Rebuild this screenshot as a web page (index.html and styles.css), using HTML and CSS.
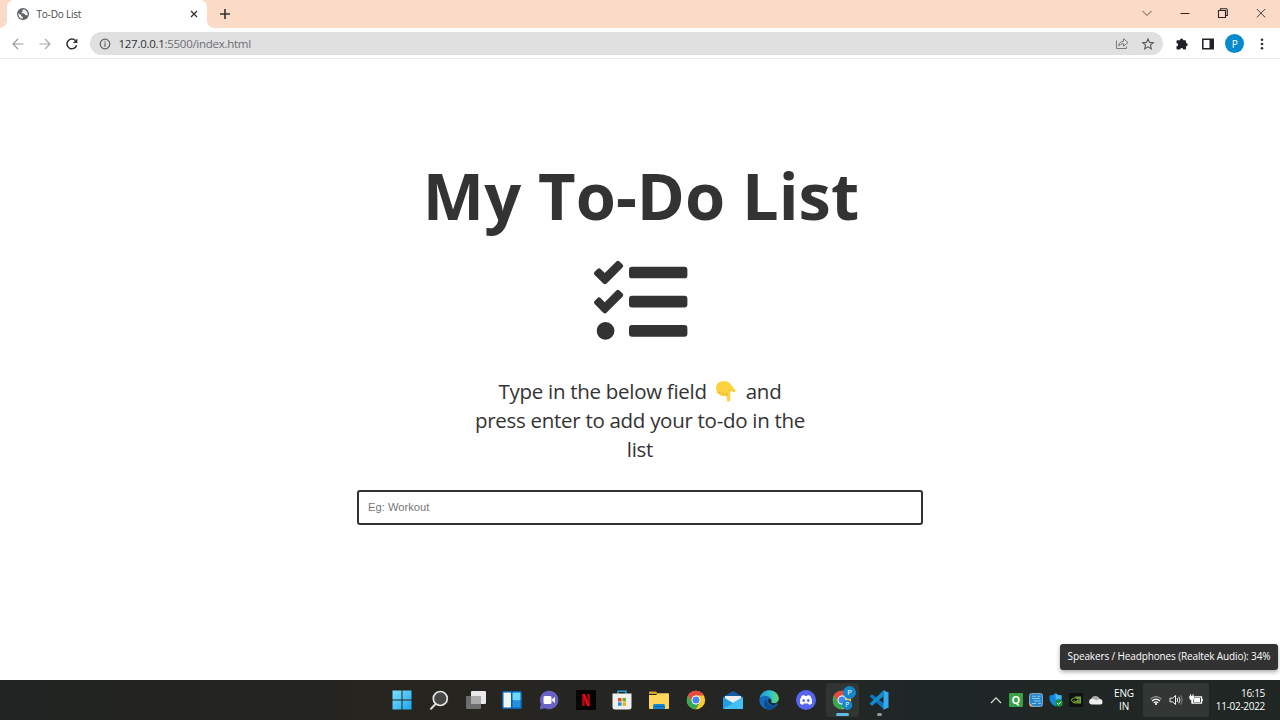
FILE: index.html
```html
<!DOCTYPE html>
<html lang="en">
<head>
<meta charset="utf-8">
<title>To-Do List</title>
<link rel="stylesheet" href="styles.css">
</head>
<body>
<div class="screen">
  <header class="tabstrip">
    <div class="tab">
      <svg class="globe" viewBox="0 0 12 12"><circle cx="6" cy="6" r="6" fill="#5f6368"/><path d="M1.2 5.2 3.8 6.7 4.6 8.2 6 9.2 5.4 10.8C2.8 10.5 1 8.200 1.200 5.200ZM6.700 1.200 5.300 2.500 5.700 3.500 4.500 4.300 4.800 5.300 7.200 5.400 8.200 6.900 10.500 7.500C11.200 4.900 9.800 2.200 6.700 1.200Z" fill="#f5f5f5"/></svg>
      <span class="tab-title">To-Do List</span>
      <svg class="tab-close" viewBox="0 0 8 8"><path d="M1 1 7 7M7 1 1 7" stroke="#303030" stroke-width="1.3"/></svg>
    </div>
    <svg class="new-tab" viewBox="0 0 10 10"><path d="M5 0V10M0 5H10" stroke="#303030" stroke-width="1.6"/></svg>
    <div class="window-buttons">
      <svg viewBox="0 0 12 12"><path d="M1.500 4 6 8.500 10.500 4" fill="none" stroke="#5c4f49" stroke-width="1"/></svg>
      <svg viewBox="0 0 12 12"><path d="M1.500 6.500H10.500" stroke="#2e2825" stroke-width="1"/></svg>
      <svg viewBox="0 0 12 12"><path d="M1.500 3.500H8.500V10.500H1.500ZM3.500 3V1.700H9.300Q10.300 1.700 10.300 2.700V8.500H9" fill="none" stroke="#2e2825" stroke-width="1.100"/></svg>
      <svg viewBox="0 0 12 12"><path d="M1.800 2 10.200 10.400M10.200 2 1.800 10.400" stroke="#4a3f3a" stroke-width="1"/></svg>
    </div>
  </header>
  <nav class="toolbar">
    <svg class="nav-icon" viewBox="0 0 12 12"><path d="M11.500 6H1.200M6 1 1 6 6 11" fill="none" stroke="#999" stroke-width="1.200"/></svg>
    <svg class="nav-icon" viewBox="0 0 12 12"><path d="M.5 6H10.800M6 1 11 6 6 11" fill="none" stroke="#a8a8a8" stroke-width="1.200"/></svg>
    <svg class="nav-icon" viewBox="0 0 12 12"><path d="M10.600 7.300A4.900 4.900 0 1 1 9.500 2.600" fill="none" stroke="#303030" stroke-width="1.500"/><path d="M11.400.5V5H6.900Z" fill="#303030"/></svg>
    <div class="address">
      <svg class="info" viewBox="0 0 12 12"><circle cx="6" cy="6" r="4.800" fill="none" stroke="#5f6368" stroke-width="1.200"/><path d="M6 5.300V8.800M6 3.200V4.400" stroke="#5f6368" stroke-width="1.200"/></svg>
      <span class="url"><b>127.0.0.1</b>:5500/index.html</span>
      <svg class="share" viewBox="0 0 14 13"><path d="M1.500 3.500V11.500H11.500V9.500M3.700 9C4 6 5.700 4.400 8.500 4.300V1.700L13 5.600 8.500 9.200V6.700C6.300 6.700 4.800 7.500 3.700 9Z" fill="none" stroke="#77797b" stroke-width="1"/></svg>
      <svg class="star" viewBox="0 0 12 12"><path d="M6 .9 7.500 4.400 11.300 4.700 8.400 7.200 9.300 10.900 6 8.900 2.700 10.900 3.600 7.200.7 4.700 4.500 4.400Z" fill="none" stroke="#55585b" stroke-width="1.100"/></svg>
    </div>
    <div class="actions">
      <svg viewBox="0 0 12 12"><path d="M4 2.200A1.600 1.600 0 0 1 7.200 2.200H9Q10 2.200 10 3.200V5A1.600 1.600 0 0 1 10.200 8.200H10V10.500Q10 11.500 9 11.500H7.300A1.600 1.600 0 0 0 4.100 11.500H1.500Q.5 11.500.5 10.500V8.300A1.600 1.600 0 0 0 .5 5.100V3.200Q.5 2.200 1.500 2.200Z" fill="#202124"/></svg>
      <svg viewBox="0 0 12 12"><path d="M.8 1.200H11.200V10.800H.8Z" fill="none" stroke="#202124" stroke-width="1.500"/><path d="M7.500 1H11.500V11H7.500Z" fill="#202124"/></svg>
      <span class="avatar">P</span>
      <svg viewBox="0 0 12 12"><g fill="#303030"><circle cx="6" cy="1.700" r="1.300"/><circle cx="6" cy="6" r="1.300"/><circle cx="6" cy="10.300" r="1.300"/></g></svg>
    </div>
  </nav>
  <main class="page">
    <h1 class="title">My To-Do List</h1>
    <svg class="tasks" viewBox="0 0 512 512"><path fill="#333" d="M139.610 35.500a12 12 0 0 0-17 0L58.930 98.810l-22.700-22.120a12 12 0 0 0-17 0L3.530 92.410a12 12 0 0 0 0 17l47.590 47.400a12.780 12.780 0 0 0 17.610 0l15.590-15.620L156.520 69a12.090 12.090 0 0 0 .09-17zm0 159.190a12 12 0 0 0-17 0l-63.680 63.720-22.700-22.100a12 12 0 0 0-17 0L3.530 252a12 12 0 0 0 0 17L51 316.500a12.770 12.770 0 0 0 17.600 0l15.700-15.690 72.200-72.220a12 12 0 0 0 .09-16.900zM64 368c-26.490 0-48.590 21.500-48.590 48S37.530 464 64 464a48 48 0 0 0 0-96zm432 16H208a16 16 0 0 0-16 16v32a16 16 0 0 0 16 16h288a16 16 0 0 0 16-16v-32a16 16 0 0 0-16-16zm0-320H208a16 16 0 0 0-16 16v32a16 16 0 0 0 16 16h288a16 16 0 0 0 16-16V80a16 16 0 0 0-16-16zm0 160H208a16 16 0 0 0-16 16v32a16 16 0 0 0 16 16h288a16 16 0 0 0 16-16v-32a16 16 0 0 0-16-16z"/></svg>
    <p class="hint"><span class="line first">Type in the below field <svg class="hand" viewBox="0 0 20 21"><path d="M0 7C0 3 3 .3 7.500.3H9C12.500.3 14 2 15.500 4.500L19 8.500C20.500 10.300 19 11.800 17.300 11L14.300 9.700V19C14.300 21 10.800 21 10.800 19V14.500C10 15.800 8 15.800 7.500 14.500 6 15.600 4.200 15 4 13.300 2 13.500.5 12.300.8 10.500Q0 9.500 0 7Z" fill="#fdd23f"/><path d="M3.900 13.200V10.800M7.400 14.400V11.500M10.800 14.500V11.800M14.300 9.700 13 8.700" fill="none" stroke="#dda52e" stroke-width=".8"/></svg> and</span><span class="line">press enter to add your to-do in the</span><span class="line last">list</span></p>
    <input class="todo" type="text" placeholder="Eg: Workout">
  </main>
  <footer class="taskbar">
    <div class="apps">
      <div class="app"><svg viewBox="0 0 20 20"><defs><linearGradient id="win" x1="0" y1="0" x2="1" y2="1"><stop stop-color="#7de2ff"/><stop offset="1" stop-color="#1ba5ef"/></linearGradient></defs><path d="M.5.5H9.500V9.500H.5ZM10.500.5H19.500V9.500H10.500ZM.5 10.500H9.500V19.500H.5ZM10.500 10.500H19.500V19.500H10.500Z" fill="url(#win)"/></svg></div>
      <div class="app"><svg viewBox="0 0 20 20"><path d="M7 13.500 2 18.700" stroke="#ddd" stroke-width="2" stroke-linecap="round"/><circle cx="11.300" cy="8.500" r="7" fill="#484846" stroke="#e2e2e2" stroke-width="1.700"/></svg></div>
      <div class="app"><svg viewBox="0 0 20 20"><rect x="5" y="1" width="15" height="13" rx="1" fill="#e9e9e9"/><rect x="0" y="6" width="15" height="13" rx="1" fill="#777" fill-opacity=".88"/><path d="M5 6H15V14H5Z" fill="#aaa"/></svg></div>
      <div class="app"><svg viewBox="0 0 20 20"><rect y="1" width="20" height="18" rx="1.500" fill="#0960aa"/><rect x="1.500" y="2.500" width="7.500" height="15" rx=".7" fill="#f2f5f7"/><rect x="10.500" y="2.500" width="8" height="8" rx=".7" fill="#6ed5ff"/><rect x="10.500" y="11" width="8" height="6.500" rx=".7" fill="#258fe0"/></svg></div>
      <div class="app"><svg viewBox="0 0 20 20"><path d="M10.300.8A9.200 9.200 0 1 1 6.200 18.300L.8 19.300 1.800 14A9.200 9.200 0 0 1 10.300.8Z" fill="#6862c5"/><rect x="4.500" y="6" width="8" height="8" rx="1.500" fill="#fff"/><path d="M13 9.200 16 6.800V13.200L13 10.800Z" fill="#eee"/></svg></div>
      <div class="app"><svg viewBox="0 0 20 20"><path d="M0 0H20V20H0Z" fill="#050505"/><path d="M6.200 4H8.800V16L6.200 16.300ZM11.200 4H13.800V16.300L11.200 16Z" fill="#b20710"/><path d="M6.200 4H8.900L13.800 16.300 11 16Z" fill="#e50914"/></svg></div>
      <div class="app"><svg viewBox="0 0 20 20"><path d="M6 4V1.200H14V4" fill="none" stroke="#2f9ed4" stroke-width="1.500"/><path d="M.5 3.500H19.500V17Q19.500 19.500 17 19.500H3Q.5 19.500.5 17Z" fill="#f0f0f0"/><path d="M6 8H9.500V11.500H6Z" fill="#e7482b"/><path d="M10.500 8H14V11.500H10.500Z" fill="#71ad20"/><path d="M6 12.300H9.500V15.800H6Z" fill="#1791dc"/><path d="M10.500 12.300H14V15.800H10.500Z" fill="#f6ad12"/></svg></div>
      <div class="app"><svg viewBox="0 0 20 20"><path d="M0 2.500Q0 1.500 1 1.500H7L9 4H0Z" fill="#dda12a"/><path d="M0 5H7L9 3.200H19Q20 3.200 20 4.200V18Q20 19 19 19H1Q0 19 0 18Z" fill="#ffd55b"/><path d="M4 19V15.500Q4 14 5.500 14H14.500Q16 14 16 15.500V19Z" fill="#1685d1"/><path d="M5.500 16.500H14.500" stroke="#0864ad"/></svg></div>
      <div class="app"><svg viewBox="0 0 20 20"><circle cx="10" cy="10" r="9.200" fill="#fbc92c"/><path d="M2.030 5.400A9.200 9.200 0 0 1 17.970 5.400H10L6 12.300Z" fill="#e44a3d"/><path d="M2.030 5.400A9.200 9.200 0 0 0 10 19.200L14 12.300H6Z" fill="#35a853"/><circle cx="10" cy="10" r="4.500" fill="#fff"/><circle cx="10" cy="10" r="3.500" fill="#4285f4"/></svg></div>
      <div class="app"><svg viewBox="0 0 20 20"><path d="M0 7 10 1 20 7V12H0Z" fill="#115da7"/><path d="M2 6H18V15H2Z" fill="#eee"/><path d="M0 7 10 13 20 7V18Q20 19 19 19H1Q0 19 0 18Z" fill="#239ce3"/><path d="M0 19 10 13 20 7V18Q20 19 19 19Z" fill="#43c0f3"/></svg></div>
      <div class="app"><svg viewBox="0 0 20 20"><defs><linearGradient id="edge"><stop stop-color="#218fd4"/><stop offset=".6" stop-color="#35c4cc"/><stop offset="1" stop-color="#67d65b"/></linearGradient></defs><circle cx="10" cy="10" r="9.700" fill="#126cbb"/><path d="M.5 8.500C1.500 3 5.500.3 10.300.3 16 .3 20 4.500 19.800 9 19.600 13 15 14.300 12 12.500 13.500 9 11 6.500 7.500 6 4.500 5.700 2 6.600.5 8.500Z" fill="url(#edge)"/><path d="M8.500 9C7 11 8.500 15 13 15.500Q16 15.800 18 14.500C16 18 12 20 9 19.500 4 17 3.500 11 8.500 9Z" fill="#114a8e"/><path d="M9.500 9Q8 12.500 12 14.500 16 16 19 13L20 13.500V10.500Q17 14.500 12 12.600 13 10.500 11.500 9Z" fill="#242523"/></svg></div>
      <div class="app"><svg viewBox="0 0 20 20"><circle cx="10" cy="10" r="10" fill="#5865f2"/><path d="M5.700 5.800 8.300 5 9 6H11L11.700 5 14.300 5.800Q16.500 9.500 16 13.500L13.200 15 12.300 13.500H7.700L6.800 15 4 13.500Q3.500 9.500 5.700 5.800Z" fill="#fff"/><ellipse cx="7.700" cy="10.500" rx="1.300" ry="1.500" fill="#5865f2"/><ellipse cx="12.300" cy="10.500" rx="1.300" ry="1.500" fill="#5865f2"/></svg></div>
      <div class="app active"><svg class="chrome-profile" viewBox="0 0 26 26"><circle cx="12" cy="13" r="9.200" fill="#fbc92c"/><path d="M4.030 8.400A9.200 9.200 0 0 1 19.970 8.400H12L8 15.300Z" fill="#e44a3d"/><path d="M4.030 8.400A9.200 9.200 0 0 0 12 22.200L16 15.300H8Z" fill="#35a853"/><circle cx="12" cy="13" r="4.500" fill="#fff"/><circle cx="12" cy="13" r="3.500" fill="#4285f4"/><circle cx="19.500" cy="5.500" r="6.500" fill="#1386c9"/><circle cx="17.300" cy="18" r="5" fill="#1386c9"/><text class="badge-text" x="19.500" y="8.200" font-size="7.500">P</text><text class="badge-text" x="17.300" y="20.300" font-size="6.500">P</text></svg></div>
      <div class="app running"><svg viewBox="0 0 20 20"><path d="M.5 6.300 3 4.300 15 13.500V19.500Z" fill="#0877be"/><path d="M.5 13.700 14.500.2V6.200L3 15.700Z" fill="#138bd0"/><path d="M14.500.2 19.500 2.500V17.500L14.500 19.800Z" fill="#35a9ed"/></svg></div>
    </div>
    <div class="tray">
      <svg viewBox="0 0 14 14"><path d="M2 10 7 4.800 12 10" fill="none" stroke="#ddd" stroke-width="1.200"/></svg>
      <span class="quick-heal">Q</span>
      <svg viewBox="0 0 14 14"><rect x=".5" y=".5" width="13" height="13" rx="2" fill="#2386cf" stroke="#8da4b2"/><path d="M3 3.200H7M8 3.200H11.500M3 5.500H11M5 8H11.500M3 10.500H7M9 10.500H12" stroke="#8dccef" stroke-width="1"/><path d="M1 10V13H4Z" fill="#e5ae38"/></svg>
      <svg viewBox="0 0 14 14"><path d="M.5 2.500Q4 2.500 6.500.3 9 2.500 12.500 2.500V6Q12 11 6.500 13.500 1 11 .5 6Z" fill="#1388db"/><path d="M6.500.3Q9 2.500 12.500 2.500V6.500H6.500Z" fill="#45b6f1"/><circle cx="10" cy="10" r="3.800" fill="#16913d"/><path d="M8 10 9.500 11.400 12 8.800" stroke="#fff" fill="none"/></svg>
      <svg viewBox="0 0 14 14"><path d="M0 0H14V14H0Z" fill="#111"/><path d="M2 7Q5 3.600 8 5.200 10 6.500 8 8.300 6 9 5 7.200M2 7Q4.500 11 8.500 9.500 10 8.500 10.500 7" fill="none" stroke="#76a13a" stroke-width="1.100"/><path d="M6 3.500H12V10.500H7Q11 9 11 7 9 4.500 6 4.500Z" fill="#76a13a"/></svg>
      <svg viewBox="0 0 14 14"><path d="M2.500 11.500A2.900 2.900 0 0 1 2.300 5.800 4.700 4.700 0 0 1 10.700 6 2.800 2.800 0 0 1 11.500 11.500Z" fill="#eee"/><path d="M2.300 5.800A4.700 4.700 0 0 1 10.700 6Q8.500 6 7.500 7.600Q5.500 5.500 2.300 5.800Z" fill="#aaa"/></svg>
    </div>
    <div class="language"><span>ENG</span><span>IN</span></div>
    <div class="quick-settings">
      <svg viewBox="0 0 14 14"><path d="M1.500 6.200Q7 1 12.500 6.200" fill="none" stroke="#999" stroke-width="1.100"/><path d="M3 8Q7 4.200 11 8M4.800 9.800Q7 7.800 9.200 9.800" fill="none" stroke="#fff" stroke-width="1.200"/><circle cx="7" cy="11" r="1.100" fill="#fff"/></svg>
      <svg viewBox="0 0 14 14"><path d="M1 5.200H3.500L6.500 2.500V11.500L3.500 8.800H1ZM8 5Q9.300 7 8 9M9.800 3.700Q12 7 9.800 10.300" fill="none" stroke="#eee" stroke-width="1"/><path d="M11.500 2.300Q14.700 7 11.500 11.700" fill="none" stroke="#888"/></svg>
      <svg viewBox="0 0 14 14"><path d="M5.500 3.800H12.500V10.200H3.500V7" fill="none" stroke="#fff" stroke-width="1.200"/><path d="M5.500 5H11V9H4.700V7.500ZM13.200 5.700H14V8.300H13.200Z" fill="#fff"/><path d="M.8 3.300H4.800V5.500Q4.700 6.700 2.800 6.700 .9 6.700.8 5.500ZM1.500 1.300V3M4 1.300V3M2.800 6.500V10.500" fill="#fff" stroke="#fff"/></svg>
    </div>
    <div class="clock"><span>16:15</span><span>11-02-2022</span></div>
  </footer>
  <div class="volume-tip">Speakers / Headphones (Realtek Audio): 34%</div>
</div>
</body>
</html>
```

FILE: styles.css
```css
* { box-sizing: border-box; }
body { margin: 0; font-family: "Open Sans", "Noto Sans", sans-serif; color: #333; }
svg { display: block; flex: none; overflow: visible; }
.screen { position: relative; width: 1280px; height: 720px; display: flex; flex-direction: column; overflow: hidden; background: #fff; }
.tabstrip { height: 28px; background: #fcdac8; display: flex; align-items: center; padding-left: 7px; }
.tab { position: relative; width: 199.5px; height: 28px; background: #fff; border-radius: 7px 7px 0 0; display: flex; align-items: center; padding: 0 9px 0 10px; }
.tab::before, .tab::after { content: ""; position: absolute; bottom: 0; width: 7px; height: 7px; }
.tab::before { left: -7px; background: radial-gradient(circle at 0 0, #fcdac8 6.5px, #fff 7px); }
.tab::after { right: -7px; background: radial-gradient(circle at 100% 0, #fcdac8 6.5px, #fff 7px); }
.globe { width: 12px; height: 12px; margin-right: 7.5px; }
.tab-title { font-size: 10px; letter-spacing: -0.2px; color: #45484b; }
.tab-close { width: 8px; height: 8px; margin-left: auto; }
.new-tab { width: 10px; height: 10px; margin-left: 13.5px; }
.window-buttons { margin-left: auto; display: flex; gap: 26px; padding: 0 13.5px 3px 0; }
.window-buttons svg { width: 12px; height: 12px; }
.toolbar { height: 31px; border-bottom: 1px solid #e9e9e9; display: flex; align-items: center; padding: 1px 12px 0; }
.nav-icon { width: 12px; height: 12px; margin-right: 15px; }
.nav-icon:nth-child(3) { margin-right: 12px; }
.address { width: 1073px; height: 23px; border-radius: 12px; background: #e0e0e0; display: flex; align-items: center; padding: 0 9px; }
.info { width: 12px; height: 12px; margin-right: 7.5px; }
.url { font-size: 11.5px; letter-spacing: -0.28px; color: #6a6d70; }
.url b { font-weight: 400; color: #303236; }
.share { width: 14px; height: 13px; margin-left: auto; }
.star { width: 12px; height: 12px; margin-left: 13px; }
.actions { display: flex; align-items: center; gap: 14.2px; margin-left: 13px; }
.actions svg { width: 12px; height: 12px; }
.avatar { width: 19px; height: 19px; margin: 0 -3px; border-radius: 50%; background: #078acb; color: #fff; font-size: 10px; display: flex; align-items: center; justify-content: center; }
.page { flex: 1; display: flex; flex-direction: column; align-items: center; padding-top: 91px; }
.title { margin: 0; padding-left: 2px; font-size: 65px; line-height: 90px; font-weight: 700; white-space: nowrap; }
.tasks { width: 93.4px; height: 93.4px; margin: 15.4px 0 0 0.8px; }
.hint { margin: 28.2px 0 0; display: flex; flex-direction: column; align-items: center; font-size: 20.5px; line-height: 29.2px; letter-spacing: -0.29px; }
.line { white-space: pre; }
.hand { display: inline-block; width: 20px; height: 21px; margin: 0 5px 0 4px; vertical-align: -3px; }
.todo { width: 566px; height: 35px; margin-top: 25.4px; padding: 0 9px; border: 2px solid #333; border-radius: 3px; background: #fff; font: 11.2px "Liberation Sans", Arial, sans-serif; outline: 0; }
.todo::placeholder { color: #777; opacity: 1; }
.taskbar { height: 40px; background: linear-gradient(90deg, #202321 0, #272520 35%, #242624 60%, #1f2726 72%, #202624 100%); display: flex; align-items: center; color: #fff; padding-left: 384px; }
.apps { display: flex; }
.app { position: relative; width: 36.7px; height: 40px; display: flex; align-items: center; justify-content: center; }
.app svg { width: 20px; height: 20px; }
.app .chrome-profile { width: 26px; height: 26px; }
.app.active { width: 33px; height: 34px; margin: 3px 1.85px; background: #303433; border-radius: 3px; }
.app.active::after, .app.running::after { content: ""; position: absolute; border-radius: 2px; }
.app.active::after { bottom: 1px; width: 13px; height: 3px; background: #61b9eb; }
.app.running::after { bottom: 4px; width: 5px; height: 3px; background: #999; }
.badge-text { font-family: "Open Sans", sans-serif; fill: #fff; text-anchor: middle; }
.tray { display: flex; gap: 6px; margin-left: auto; }
.tray svg { width: 14px; height: 14px; }
.quick-heal { width: 14px; height: 14px; background: #35a044; font-size: 11px; font-weight: 700; line-height: 13px; text-align: center; border-radius: 1px; }
.language { width: 40px; padding-left: 2px; font-size: 10px; line-height: 13px; display: flex; flex-direction: column; align-items: center; letter-spacing: -0.1px; }
.quick-settings { width: 66px; height: 34px; border-radius: 3px; background: #323736; display: flex; align-items: center; justify-content: center; gap: 6px; }
.quick-settings svg { width: 14px; height: 14px; }
.clock { width: 71px; padding-right: 15px; display: flex; flex-direction: column; align-items: flex-end; font-size: 10px; line-height: 13px; letter-spacing: -0.3px; white-space: nowrap; }
.volume-tip { position: absolute; left: 1060px; top: 644px; width: 218px; height: 26px; background: #323232; border-radius: 3px; box-shadow: 0 2px 4px #0005; color: #fff; font-size: 10px; line-height: 25px; text-align: center; letter-spacing: -0.13px; white-space: nowrap; }
```
